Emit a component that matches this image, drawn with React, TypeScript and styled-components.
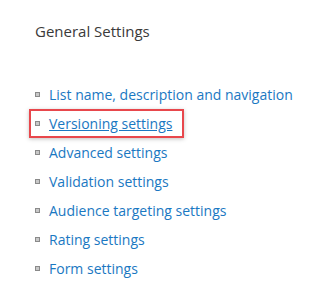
import React, { FC } from 'react';
import styled, { createGlobalStyle } from 'styled-components';

const GlobalStyle = createGlobalStyle`
  body {
    margin: 0;
    background: #ffffff;
    font-family: 'Open Sans', 'Noto Sans', sans-serif;
  }
`;

const Page = styled.div`
  width: 317px;
  height: 294px;
  padding: 20px 0 0 35px;
  box-sizing: border-box;
`;

const Heading = styled.div`
  font-size: 15px;
  color: #3a3a3a;
  line-height: 22px;
  margin-bottom: 38px;
`;

const List = styled.ul`
  list-style: none;
  margin: 0;
  padding: 0;
  display: flex;
  flex-direction: column;
`;

const Item = styled.li<{ highlighted?: boolean }>`
  display: flex;
  align-items: center;
  gap: 9px;
  height: 29px;
  margin-left: ${p => (p.highlighted ? '-6px' : '0')};
  padding-left: ${p => (p.highlighted ? '4px' : '0')};
  width: ${p => (p.highlighted ? '155px' : 'auto')};
  box-sizing: border-box;
  border: ${p => (p.highlighted ? '2px solid #e8474c' : 'none')};
  box-shadow: ${p => (p.highlighted ? '0 1px 4px rgba(0,0,0,0.25)' : 'none')};
`;

const Bullet = styled.span`
  width: 5px;
  height: 5px;
  background: #c8c8c8;
  border: 1px solid #8a8a8a;
  box-sizing: border-box;
  flex-shrink: 0;
`;

const Link = styled.a<{ underline?: boolean }>`
  font-size: 14px;
  color: #1a78c2;
  text-decoration: ${p => (p.underline ? 'underline' : 'none')};
  white-space: nowrap;
`;

const items = [
  'List name, description and navigation',
  'Versioning settings',
  'Advanced settings',
  'Validation settings',
  'Audience targeting settings',
  'Rating settings',
  'Form settings',
];

const App: FC = () => (
  <Page>
    <GlobalStyle />
    <Heading>General Settings</Heading>
    <List>
      {items.map((t, i) => (
        <Item key={t} highlighted={i === 1}>
          <Bullet />
          <Link href="#" underline={i === 1}>{t}</Link>
        </Item>
      ))}
    </List>
  </Page>
);

export default App;
